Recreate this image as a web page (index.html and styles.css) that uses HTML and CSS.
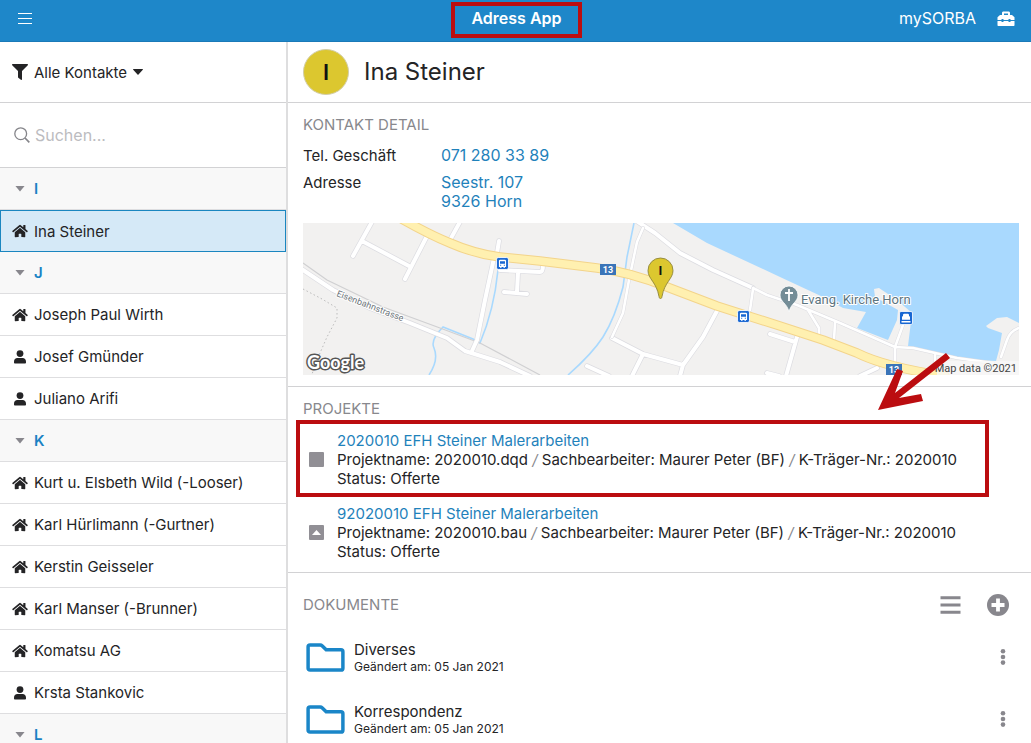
FILE: index.html
```html
<!DOCTYPE html>
<html lang="de">
<head>
<meta charset="utf-8">
<meta name="viewport" content="width=device-width, initial-scale=1">
<title>Adress App</title>
<link rel="stylesheet" href="styles.css">
</head>
<body>
<svg class="defs" aria-hidden="true">
  <symbol id="house" viewBox="0 0 576 512"><path d="M280.400 148.300 96 300.100V464a16 16 0 0 0 16 16l112.100-.300a16 16 0 0 0 15.900-16V368a16 16 0 0 1 16-16h64a16 16 0 0 1 16 16v95.600a16 16 0 0 0 16 16.100L464 480a16 16 0 0 0 16-16V300L295.700 148.300a12.200 12.200 0 0 0-15.300 0zM571.600 251.500 488 182.600V44a12 12 0 0 0-12-12h-56a12 12 0 0 0-12 12v72.600L318.500 43a48 48 0 0 0-61 0L4.300 251.500a12 12 0 0 0-1.600 16.900l25.500 31a12 12 0 0 0 16.900 1.600L280.400 107.200a12.200 12.200 0 0 1 15.300 0l235.200 193.700a12 12 0 0 0 16.900-1.600l25.500-31a12 12 0 0 0-1.700-16.800z"/></symbol>
  <symbol id="person" viewBox="1 1 14 14"><circle cx="8" cy="4.600" r="3.400"/><path d="M2 12.700C2 10.200 3.600 9 5.200 9h5.600c1.600 0 3.200 1.200 3.200 3.700V13.600c0 .600-.500 1-1.100 1H3.100c-.6 0-1.100-.4-1.100-1z"/></symbol>
  <symbol id="folder" viewBox="0 0 40 30"><path d="M4 2h10.500c1 0 1.500.300 2.200 1l4 4H36c1.300 0 2 .800 2 2v17c0 1.300-.700 2-2 2H4c-1.300 0-2-.700-2-2V4c0-1.200.700-2 2-2z" fill="none" stroke="#1a86c8" stroke-width="3.600"/></symbol>
  <symbol id="dots" viewBox="0 0 6 18"><circle cx="3" cy="3.200" r="2.300"/><circle cx="3" cy="9" r="2.300"/><circle cx="3" cy="14.600" r="2.300"/></symbol>
  <symbol id="bus" viewBox="0 0 12 12"><rect x=".5" y=".5" width="11" height="11" rx="1.500" fill="#1967d2" stroke="#fff" stroke-width=".8"/><path d="M3.500 2.500h5l.8.8v5.900H8.100v1H7v-1H5v1H3.900v-1H2.700V3.300z" fill="#fff"/><path d="M3.700 4h4.600v2.200H3.700zM3.800 7.200h1v.9h-1zM7.200 7.200h1v.9h-1z" fill="#1967d2"/></symbol>
</svg>

<header class="topbar">
  <button class="icon-button" aria-label="Menü"><svg width="14" height="13" viewBox="0 0 14 13"><path d="M0 1.500h14M0 6.500h14M0 11.500h14" stroke="#fff" stroke-width="1"/></svg></button>
  <h1 class="app-title">Adress App</h1>
  <div class="account">
    <a href="#">mySORBA</a>
    <button class="icon-button" aria-label="Werkzeuge"><svg width="18" height="16" viewBox="0 0 18 16"><path fill="#fff" fill-rule="evenodd" d="M5 4V2C5 1 5.600.500 6.500.500h5c.900 0 1.500.500 1.500 1.500v2h2l2.500 2.300V9H13.500V7.900h-2V9h-5V7.900h-2V9H.5V6.300L3 4zm2 0h4V2.400H7z"/><path fill="#fff" d="M.5 10h4v1.100h2V10h5v1.100h2V10h4v4c0 .700-.300 1-1 1h-15c-.700 0-1-.300-1-1z"/></svg></button>
  </div>
</header>

<div class="layout">
  <aside class="sidebar">
    <button class="filter">
      <svg width="16" height="16" viewBox="0 0 16 16"><path d="M.700 0h14.600c.700 0 .900.700.500 1.200L10 7v8.300c0 .600-.600.900-1.100.500L6.300 13.800C6.100 13.600 6 13.400 6 13.100V7L.200 1.200C-.200.700 0 0 .700 0z"/></svg>
      <span>Alle Kontakte</span>
      <svg width="10" height="6" viewBox="0 0 10 6"><path d="M.500 0h9c.500 0 .600.500.300.800L5.500 5.600a.7.700 0 0 1-1 0L.200.800C-.100.500 0 0 .500 0z"/></svg>
    </button>
    <label class="search">
      <svg width="16" height="16" viewBox="0 0 16 16" fill="none" stroke="#85858a" stroke-width="1.300"><circle cx="6.700" cy="6.700" r="5.900"/><path d="m11 11 4.300 4.300" stroke-width="1.700"/></svg>
      <input type="search" placeholder="Suchen..." aria-label="Suchen">
    </label>
    <nav class="contacts" aria-label="Kontakte">
      <button class="group"><span class="caret"></span>I</button>
      <a class="contact selected" href="#"><svg><use href="#house"/></svg>Ina Steiner</a>
      <button class="group"><span class="caret"></span>J</button>
      <a class="contact" href="#"><svg><use href="#house"/></svg>Joseph Paul Wirth</a>
      <a class="contact" href="#"><svg><use href="#person"/></svg>Josef Gmünder</a>
      <a class="contact" href="#"><svg><use href="#person"/></svg>Juliano Arifi</a>
      <button class="group"><span class="caret"></span>K</button>
      <a class="contact" href="#"><svg><use href="#house"/></svg>Kurt u. Elsbeth Wild (-Looser)</a>
      <a class="contact" href="#"><svg><use href="#house"/></svg>Karl Hürlimann (-Gurtner)</a>
      <a class="contact" href="#"><svg><use href="#house"/></svg>Kerstin Geisseler</a>
      <a class="contact" href="#"><svg><use href="#house"/></svg>Karl Manser (-Brunner)</a>
      <a class="contact" href="#"><svg><use href="#house"/></svg>Komatsu AG</a>
      <a class="contact" href="#"><svg><use href="#person"/></svg>Krsta Stankovic</a>
      <button class="group"><span class="caret"></span>L</button>
    </nav>
  </aside>

  <main class="detail">
    <div class="person-head">
      <span class="avatar">I</span>
      <h2>Ina Steiner</h2>
    </div>

    <section class="panel">
      <h3>KONTAKT DETAIL</h3>
      <dl class="fields">
        <dt>Tel. Geschäft</dt><dd><a href="#">071 280 33 89</a></dd>
        <dt>Adresse</dt><dd><a href="#">Seestr. 107<br>9326 Horn</a></dd>
      </dl>
      <svg class="map" viewBox="303 223 716 152" preserveAspectRatio="xMidYMid slice" role="img" aria-label="Karte Horn">
        <rect x="303" y="223" width="716" height="152" fill="#f2f1f0"/>
        <path fill="#a9d9fe" d="M673 223 707 243 780 277 823 297 843 308 866 312 857 328 888 340 897 320 898 310 875 297 874 289 879 288 897 300 912 313 908 346 937 353 960 359 996 361 999 350 1002 333 988 328 986 326 997 318 1007 317 1019 323V223z"/>
        <g fill="none" stroke="#a9d9fe" stroke-width="1.600">
          <path d="M498 270Q494 310 480 343L473 339 443 327Q430 340 434 348 439 360 429 375"/>
          <path d="M634 223 627 257 623 287Q615 318 603 337 592 354 568 375"/>
        </g>
        <path d="M303 263 327 280 383 307 440 328 480 343 540 375" fill="none" stroke="#d0d0d2" stroke-width="1.200"/>
        <path d="M303 289 322 299 337 308V318L327 337 320 353 312 374" fill="none" stroke="#bbb" stroke-width="1" stroke-dasharray="1.500 2.500"/>
        <g fill="none" stroke-linejoin="round" stroke-linecap="round">
          <path stroke="#dcdce1" stroke-width="5.400" d="M373 220 353 256M362 241 409 266M427 236 405 279M461 220 450 240M499 241 497 253M494 258 485 300 477 340 472 351M500 270 540 272Q543 272 543 265M518 273 517 292M504 292 527 294M300 268 333 290 370 308 410 323 447 338 465 351 500 362 530 376M635 220 655 233 680 253 713 270 753 288M612 338 643 354 683 365M643 354 632 376M718 309 703 337 683 365 680 376M587 366 609 376M770 334 795 342M797 337 786 376M767 373 779 376M877 368 860 376"/>
          <path stroke="#fff" stroke-width="4" d="M373 220 353 256M362 241 409 266M427 236 405 279M461 220 450 240M499 241 497 253M494 258 485 300 477 340 472 351M500 270 540 272Q543 272 543 265M518 273 517 292M504 292 527 294M300 268 333 290 370 308 410 323 447 338 465 351 500 362 530 376M635 220 655 233 680 253 713 270 753 288M612 338 643 354 683 365M643 354 632 376M718 309 703 337 683 365 680 376M587 366 609 376M770 334 795 342M797 337 786 376M767 373 779 376M877 368 860 376"/>
          <path stroke="#dcdce1" stroke-width="3.600" d="M643 228 637 242 629 280 623 313 612 337M753 289 750 310M753 288 767 295 797 305 840 323 895 347 913 348 957 358 993 363M903 325 895 347V367M835 323 834 340M808 310 819 328V335M935 355V372M1019 328Q1010 331 1007 340L1001 357"/>
          <path stroke="#fff" stroke-width="2.600" d="M643 228 637 242 629 280 623 313 612 337M753 289 750 310M753 288 767 295 797 305 840 323 895 347 913 348 957 358 993 363M903 325 895 347V367M835 323 834 340M808 310 819 328V335M935 355V372M1019 328Q1010 331 1007 340L1001 357"/>
          <path stroke="#f3d48b" stroke-width="9.600" d="M400 218Q430 235 450 243 475 254 500 257L540 261 597 268Q630 272 667 287L717 306 780 326 823 340 857 353Q885 367 945 376"/>
          <path stroke="#fff0b0" stroke-width="7.600" d="M400 218Q430 235 450 243 475 254 500 257L540 261 597 268Q630 272 667 287L717 306 780 326 823 340 857 353Q885 367 945 376"/>
        </g>
        <text class="street" transform="translate(336 296) rotate(21)">Eisenbahnstrasse</text>
        <use href="#bus" x="496" y="257" width="13" height="13"/>
        <use href="#bus" x="737" y="310" width="13" height="13"/>
        <rect x="899.500" y="311.500" width="13" height="13" rx="1.500" fill="#1967d2" stroke="#fff" stroke-width=".8"/>
        <path d="M903 316v-1.500l1-.8h4l1 .8v1.500l1 .7v3h-8v-3zM901.500 321h9v1.400h-9z" fill="#fff"/>
        <rect x="600" y="264" width="16" height="11" fill="#3a74b8"/><text class="shield" x="608" y="272.500">13</text>
        <rect x="886" y="364" width="16" height="11" fill="#3a74b8"/><text class="shield" x="894" y="372.500">13</text>
        <path d="M789 312C787 303 780 302 780 295a9 9 0 0 1 18 0c0 7-7 8-9 17z" fill="#748d97" stroke="#fff" stroke-width=".8"/>
        <path d="M789 289v12M785 293h8" stroke="#fff" stroke-width="1.800"/>
        <text class="place" x="801" y="304">Evang. Kirche Horn</text>
        <path d="M660.500 298.500c-1 0-1.200-.5-1.500-2C656.500 282 648 279 648 270.500a12.500 12.500 0 0 1 25 0c0 8.500-8.500 11.500-11 26-.300 1.500-.500 2-1.500 2z" fill="#dcc72f" stroke="#8f8439" stroke-width=".9"/>
        <text class="pin-label" x="660.500" y="275">I</text>
        <text class="logo" x="307" y="369">Google</text>
        <rect x="937" y="361" width="82" height="14" fill="#f8f8f8" fill-opacity=".8"/>
        <text class="copyright" x="1017" y="372">Map data ©2021</text>
      </svg>
    </section>

    <section class="panel">
      <h3>PROJEKTE</h3>
      <div class="projects">
        <article class="project highlighted">
          <span class="square"></span>
          <div>
            <a href="#">2020010 EFH Steiner Malerarbeiten</a>
            <p>Projektname: 2020010.dqd <i>/</i> Sachbearbeiter: Maurer Peter (BF) <i>/</i> K-Träger-Nr.: 2020010</p>
            <p>Status: Offerte</p>
          </div>
          <svg class="arrow" width="74" height="60" viewBox="877 352 74 60" aria-hidden="true"><path fill="#bb0d10" d="M878 410 897 369 903 371 895 393 946 353 950 358 899 398 921 394 923 401z"/></svg>
        </article>
        <article class="project">
          <span class="square up"></span>
          <div>
            <a href="#">92020010 EFH Steiner Malerarbeiten</a>
            <p>Projektname: 2020010.bau <i>/</i> Sachbearbeiter: Maurer Peter (BF) <i>/</i> K-Träger-Nr.: 2020010</p>
            <p>Status: Offerte</p>
          </div>
        </article>
      </div>
    </section>

    <section class="documents">
      <div class="documents-head">
        <h3>DOKUMENTE</h3>
        <button class="icon-button" aria-label="Listenansicht"><svg width="21" height="18" viewBox="0 0 21 18"><path d="M.500 1.800h20M.500 9h20M.500 16.200h20" stroke="#88878d" stroke-width="3"/></svg></button>
        <button class="icon-button" aria-label="Hinzufügen"><svg width="22" height="22" viewBox="0 0 22 22"><circle cx="11" cy="11" r="11" fill="#88878d"/><path d="M11 4.500v13M4.500 11h13" stroke="#fff" stroke-width="3.800"/></svg></button>
      </div>
      <div class="document">
        <svg class="folder"><use href="#folder"/></svg>
        <div class="document-text"><a href="#">Diverses</a><small>Geändert am: 05 Jan 2021</small></div>
        <button class="icon-button" aria-label="Optionen Diverses"><svg width="6" height="18"><use href="#dots"/></svg></button>
      </div>
      <div class="document">
        <svg class="folder"><use href="#folder"/></svg>
        <div class="document-text"><a href="#">Korrespondenz</a><small>Geändert am: 05 Jan 2021</small></div>
        <button class="icon-button" aria-label="Optionen Korrespondenz"><svg width="6" height="18"><use href="#dots"/></svg></button>
      </div>
    </section>
  </main>
</div>
</body>
</html>
```

FILE: styles.css
```css
* { box-sizing: border-box; }

body {
  margin: 0;
  height: 100vh;
  display: flex;
  flex-direction: column;
  overflow: hidden;
  font: 15px/19px Inter, "Liberation Sans", sans-serif;
  color: #242426;
  background: #fff;
}

h1, h2, h3, p, dl, dd { margin: 0; font-weight: 400; }
a { color: inherit; text-decoration: none; }
button { font: inherit; color: inherit; background: none; border: 0; padding: 0; text-align: left; cursor: pointer; }
svg { display: block; flex: none; }
.defs { position: absolute; width: 0; height: 0; }
.icon-button { display: flex; }

.topbar {
  flex: none;
  display: grid;
  grid-template-columns: 1fr auto 1fr;
  align-items: center;
  padding: 2px 16px 6px 18px;
  background: #1e87c9;
  border-bottom: 1px solid #1a7ab8;
  color: #fff;
  font-size: 16px;
}
.app-title {
  font-size: 16px;
  font-weight: 600;
  line-height: 25px;
  padding: 0 16px 3px;
  border: 4px solid #bb0d10;
  margin: 0 0 -3px;
}
.account { display: flex; justify-content: flex-end; align-items: center; gap: 21px; }

.layout { flex: 1; min-height: 0; display: grid; grid-template-columns: 288px minmax(0, 1fr); }

.sidebar { border-right: 2px solid #dededf; overflow: hidden; display: flex; flex-direction: column; }
.filter, .person-head { flex: none; height: 61px; border-bottom: 1px solid #d2d2d4; }
.filter { display: flex; align-items: center; gap: 6px; padding: 0 12px; width: 100%; fill: #242426; }
.search { flex: none; display: flex; align-items: center; gap: 5px; height: 65px; padding: 0 14px; border-bottom: 1px solid #d2d2d4; }
.search input { flex: 1; min-width: 0; border: 0; padding: 0; outline: 0; font: inherit; font-size: 16px; background: none; }
.search input::placeholder { color: #bcbcc0; opacity: 1; }

.contacts > * { display: flex; align-items: center; width: 100%; height: 42px; padding: 0 12px; border-bottom: 1px solid #dedee0; }
.contact svg { width: 16px; height: 14px; margin-right: 6px; fill: #242426; }
.contact.selected { background: #d5e9f7; border: 1px solid #1a86c0; padding: 0 11px; }
.group { background: #f8f8f8; color: #1a82c4; font-weight: 600; }
.caret { width: 10px; height: 6px; margin: 0 9px 0 3px; background: #88878d; clip-path: polygon(0 0, 100% 0, 50% 100%); }

.detail { overflow: hidden; }
.person-head { display: flex; align-items: center; gap: 15px; padding: 0 15px; }
.person-head h2 { font-size: 24px; line-height: 30px; }
.avatar { display: grid; place-items: center; width: 46px; height: 46px; border: 1px solid #d2cda8; border-radius: 50%; background: #dcc72f; color: #111; font-size: 22px; font-weight: 600; }

.panel { padding: 12px 12px 11px 15px; border-bottom: 1px solid #d2d2d4; }
h3 { font-size: 15px; line-height: 20px; color: #88888d; }
.fields { display: grid; grid-template-columns: 138px 1fr; row-gap: 8px; margin: 11px 0 12px; }
.fields dd { font-size: 16px; }
.fields a, .project a { color: #1f82bb; }
.map { width: 100%; height: 152px; font-family: Roboto, sans-serif; }
.map text { paint-order: stroke; stroke-linejoin: round; }
.street { font-size: 9px; fill: #6e767b; stroke: #fff; stroke-width: 2px; }
.place { font-size: 13px; fill: #5d757f; stroke: #fff; stroke-width: 2px; }
.shield { font-size: 9px; font-weight: 700; fill: #fff; text-anchor: middle; }
.pin-label { font-size: 13px; font-weight: 700; fill: #111; text-anchor: middle; }
.logo { font: 700 18px Lato, sans-serif; fill: #fff; stroke: #555; stroke-width: 3px; }
.copyright { font-size: 11px; fill: #444; text-anchor: end; }

.projects { display: flex; flex-direction: column; align-items: flex-start; gap: 16px; margin-top: 12px; }
.project { position: relative; display: flex; align-items: center; gap: 13px; padding-left: 6px; }
.project i { color: #88888d; }
.highlighted::after { content: ""; position: absolute; inset: -11px -32px -9px -7px; border: 4px solid #bb0d10; pointer-events: none; }
.arrow { position: absolute; right: 6px; bottom: 76px; }
.square { flex: none; display: grid; place-items: center; width: 15px; height: 15px; border-radius: 1px; background: #918f95; }
.up::before { content: ""; width: 9px; height: 5px; background: #fff; clip-path: polygon(50% 0, 100% 100%, 0 100%); }

.documents { padding: 21px 22px 0 15px; }
.documents-head { display: flex; align-items: center; gap: 26px; margin-bottom: 10px; }
.documents-head h3 { flex: 1; }
.document { display: flex; align-items: center; height: 62px; padding: 0 3px; fill: #88878d; }
.folder { width: 39px; height: 29px; }
.document-text { flex: 1; display: grid; padding-left: 9px; }
small { font-size: 12px; line-height: 15px; }
```
